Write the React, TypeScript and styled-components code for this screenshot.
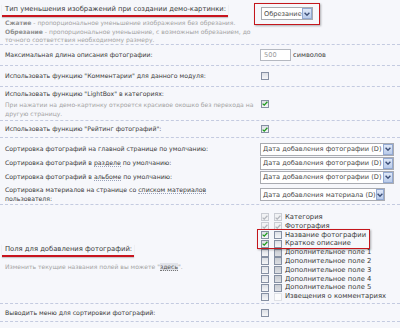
import React from 'react';
import styled, { createGlobalStyle } from 'styled-components';

const Global = createGlobalStyle`
  html, body { margin: 0; padding: 0; background: #f6f7fb; }
  body { font-family: "DejaVu Sans", Verdana, sans-serif; }
`;

const Page = styled.div`
  width: 400px;
  height: 328px;
  background: #f6f7fb;
  color: #3a3a3a;
  font-size: 6.2px;
  overflow: hidden;
`;

const Row = styled.div<{ $h: number; $align?: string; $pt?: number }>`
  box-sizing: border-box;
  height: ${p => p.$h}px;
  display: grid;
  grid-template-columns: 255px 1fr;
  align-items: ${p => p.$align ?? 'center'};
  padding: ${p => p.$pt ?? 0}px 0 0 5px;
  border-bottom: 1px dashed #c4cbe0;
`;

const Group = styled.div<{ $pt?: number }>`
  box-sizing: border-box;
  height: 67px;
  padding: ${p => p.$pt ?? 0}px 0 0 5px;
  border-bottom: 1px dashed #c4cbe0;
  display: flex;
  flex-direction: column;
`;

const SubRow = styled.div<{ $mt?: number }>`
  display: grid;
  grid-template-columns: 255px 1fr;
  align-items: center;
  min-height: 14px;
  margin-top: ${p => p.$mt ?? 0}px;
`;

const LeftCol = styled.div<{ $self?: string; $mt?: number }>`
  display: flex;
  flex-direction: column;
  align-self: ${p => p.$self ?? 'auto'};
  margin-top: ${p => p.$mt ?? 0}px;
`;

const Label = styled.div<{ $lh?: number }>`
  line-height: ${p => p.$lh ?? 10}px;
  white-space: nowrap;
`;

const Marked = styled.span`
  display: inline-block;
  margin-left: -3px;
  padding: 0 2px 1px 3px;
  border-bottom: 2px solid #c8141e;
  box-shadow: 0 1px 1px rgba(120, 120, 120, 0.35);
  font-size: 6.8px;
  line-height: 10px;
`;

const Desc = styled.div<{ $mt?: number }>`
  font-size: 6.05px;
  line-height: 8.5px;
  color: #a3a3a3;
  white-space: nowrap;
  margin-top: ${p => p.$mt ?? 0}px;
`;

const Term = styled.b`
  color: #8e8e8e;
`;

const Dotted = styled.span`
  border-bottom: 1px dotted #9aa3bb;
`;

const LinkWord = styled.span`
  background: #e2e4ea;
  color: #555;
  border-bottom: 1px dotted #777;
`;

const Control = styled.div<{ $pl?: number; $self?: string; $mt?: number }>`
  display: flex;
  align-items: center;
  padding-left: ${p => p.$pl ?? 0}px;
  align-self: ${p => p.$self ?? 'auto'};
  margin-top: ${p => p.$mt ?? 0}px;
  font-size: 6.6px;
`;

const RedFrame = styled.div`
  display: inline-flex;
  margin-left: -6px;
  padding: 3px 6px 4px 6px;
  border: 1.5px solid #c4161c;
  box-shadow: 1px 1px 2px rgba(0, 0, 0, 0.3);
`;

const SelectBox = styled.div<{ $w: number }>`
  box-sizing: border-box;
  width: ${p => p.$w}px;
  height: 13px;
  display: flex;
  align-items: center;
  background: #fff;
  border: 1px solid #a9abb1;
  color: #4a4a4a;
  font-size: 6.6px;
  padding-left: 2px;
  white-space: nowrap;
`;

const ArrowBtn = styled.span`
  box-sizing: border-box;
  margin-left: auto;
  width: 10px;
  height: 11px;
  background: linear-gradient(#dfe8f8, #b9cbea);
  border: 1px solid #93a9d2;
  display: flex;
  align-items: center;
  justify-content: center;
`;

const Input = styled.div`
  box-sizing: border-box;
  width: 31px;
  height: 12px;
  background: #fff;
  border: 1px solid #b4b8c0;
  color: #9a9a9a;
  padding-left: 3px;
  line-height: 10px;
`;

const Unit = styled.span`
  margin-left: 2px;
`;

type BoxVariant = 'normal' | 'disabled' | 'shaded' | 'faint';

const Box = styled.span<{ $v: BoxVariant }>`
  box-sizing: border-box;
  width: 8px;
  height: 8px;
  flex: none;
  display: inline-flex;
  align-items: center;
  justify-content: center;
  border: 1px solid
    ${p =>
      p.$v === 'disabled' ? '#c9ccd3' : p.$v === 'faint' ? '#dfe1e6' : '#8690a3'};
  background: ${p =>
    p.$v === 'shaded'
      ? 'linear-gradient(#c9ccd2, #dcdee3)'
      : p.$v === 'faint'
      ? '#fbfbfc'
      : p.$v === 'disabled'
      ? '#f1f2f4'
      : 'linear-gradient(#dcdfe5, #f5f6f8)'};
`;

const FieldList = styled.div`
  display: flex;
  flex-direction: column;
  padding-left: 1px;
  align-self: start;
  margin-top: 8px;
  font-size: 6.8px;
`;

const FieldRow = styled.div`
  display: flex;
  align-items: center;
  height: 8.8px;
  line-height: 8.8px;
  white-space: nowrap;
`;

const Pair = styled.span`
  display: inline-flex;
  gap: 5px;
  margin-right: 3px;
`;

const MarkedFields = styled.div`
  position: relative;
  display: flex;
  flex-direction: column;
  width: fit-content;
  &::after {
    content: '';
    position: absolute;
    top: -2px;
    bottom: -1px;
    left: -4px;
    right: -4px;
    border: 1.5px solid #c4161c;
    box-shadow: 1px 1px 2px rgba(0, 0, 0, 0.3);
    pointer-events: none;
  }
`;

const Tick = ({ color }: { color: string }) => (
  <svg width="6" height="5" viewBox="0 0 6 5">
    <path d="M0.6 2.6 L2.2 4.1 L5.4 0.8" fill="none" stroke={color} strokeWidth="1.3" />
  </svg>
);

const Check = ({ v = 'normal', on = false }: { v?: BoxVariant; on?: boolean }) => (
  <Box $v={v}>{on && <Tick color={v === 'disabled' ? '#b3b6bd' : '#1f9a1f'} />}</Box>
);

const Chevron = () => (
  <svg width="6" height="4" viewBox="0 0 6 4">
    <path d="M0.6 0.8 L3 3.2 L5.4 0.8" fill="none" stroke="#3d4f78" strokeWidth="1.4" />
  </svg>
);

const Select = ({ w, children }: { w: number; children: React.ReactNode }) => (
  <SelectBox $w={w}>
    {children}
    <ArrowBtn>
      <Chevron />
    </ArrowBtn>
  </SelectBox>
);

type Field = { name: string; a: [BoxVariant, boolean]; b: [BoxVariant, boolean] };

const fieldsTop: Field[] = [
  { name: 'Категория', a: ['disabled', true], b: ['disabled', true] },
  { name: 'Фотография', a: ['disabled', true], b: ['disabled', true] },
];
const fieldsMarked: Field[] = [
  { name: 'Название фотографии', a: ['normal', true], b: ['normal', false] },
  { name: 'Краткое описание', a: ['normal', true], b: ['normal', false] },
];
const fieldsRest: Field[] = [
  ...[1, 2, 3, 4, 5].map(
    n => ({ name: `Дополнительное поле ${n}`, a: ['normal', false], b: ['shaded', false] } as Field)
  ),
  { name: 'Извещения о комментариях', a: ['normal', false], b: ['faint', false] },
];

const FieldLine = ({ f }: { f: Field }) => (
  <FieldRow>
    <Pair>
      <Check v={f.a[0]} on={f.a[1]} />
      <Check v={f.b[0]} on={f.b[1]} />
    </Pair>
    {f.name}
  </FieldRow>
);

const sortValue = 'Дата добавления фотографии (D)';

export default function App() {
  return (
    <Page>
      <Global />
      <Row $h={45} $align="start" $pt={4}>
        <LeftCol>
          <Label>
            <Marked>Тип уменьшения изображений при создании демо-картинки:</Marked>
          </Label>
          <Desc $mt={2}>
            <Term>Сжатие</Term> - пропорциональное уменьшение изображения без обрезания.
            <br />
            <Term>Обрезание</Term> - пропорциональное уменьшение, с возможным обрезанием, до
            <br />
            точного соответствия необходимому размеру.
          </Desc>
        </LeftCol>
        <Control $mt={-1}>
          <RedFrame>
            <Select w={52}>Обрезание</Select>
          </RedFrame>
        </Control>
      </Row>

      <Row $h={21}>
        <Label>Максимальная длина описания фотографии:</Label>
        <Control>
          <Input>500</Input>
          <Unit>символов</Unit>
        </Control>
      </Row>

      <Row $h={21}>
        <Label>Использовать функцию "Комментарии" для данного модуля:</Label>
        <Control $pl={1}>
          <Check />
        </Control>
      </Row>

      <Row $h={34}>
        <LeftCol>
          <Label>Использовать функцию "LightBox" в категориях:</Label>
          <Desc $mt={2}>
            При нажатии на демо-картинку откроется красивое окошко без перехода на
            <br />
            другую страницу.
          </Desc>
        </LeftCol>
        <Control $pl={1}>
          <Check on />
        </Control>
      </Row>

      <Row $h={17}>
        <Label>Использовать функцию "Рейтинг фотографий":</Label>
        <Control $pl={1}>
          <Check on />
        </Control>
      </Row>

      <Group $pt={4}>
        <SubRow>
          <Label>Сортировка фотографий на главной странице по умолчанию:</Label>
          <Select w={134}>{sortValue}</Select>
        </SubRow>
        <SubRow>
          <Label>
            Сортировка фотографий в <Dotted>разделе</Dotted> по умолчанию:
          </Label>
          <Select w={134}>{sortValue}</Select>
        </SubRow>
        <SubRow>
          <Label>
            Сортировка фотографий в <Dotted>альбоме</Dotted> по умолчанию:
          </Label>
          <Select w={134}>{sortValue}</Select>
        </SubRow>
        <SubRow $mt={2}>
          <Label $lh={8.5}>
            Сортировка материалов на странице со <Dotted>списком материалов</Dotted>
            <br />
            пользователя:
          </Label>
          <Select w={125}>Дата добавления материала (D)</Select>
        </SubRow>
      </Group>

      <Row $h={99}>
        <LeftCol $self="start" $mt={39}>
          <Label>
            <Marked>Поля для добавления фотографий:</Marked>
          </Label>
          <Desc $mt={6}>
            Изменить текущие названия полей вы можете "<LinkWord>здесь</LinkWord>".
          </Desc>
        </LeftCol>
        <FieldList>
          {fieldsTop.map(f => (
            <FieldLine key={f.name} f={f} />
          ))}
          <MarkedFields>
            {fieldsMarked.map(f => (
              <FieldLine key={f.name} f={f} />
            ))}
          </MarkedFields>
          {fieldsRest.map(f => (
            <FieldLine key={f.name} f={f} />
          ))}
        </FieldList>
      </Row>

      <Row $h={18}>
        <Label>Выводить меню для сортировки фотографий:</Label>
        <Control $pl={1}>
          <Check />
        </Control>
      </Row>
    </Page>
  );
}
